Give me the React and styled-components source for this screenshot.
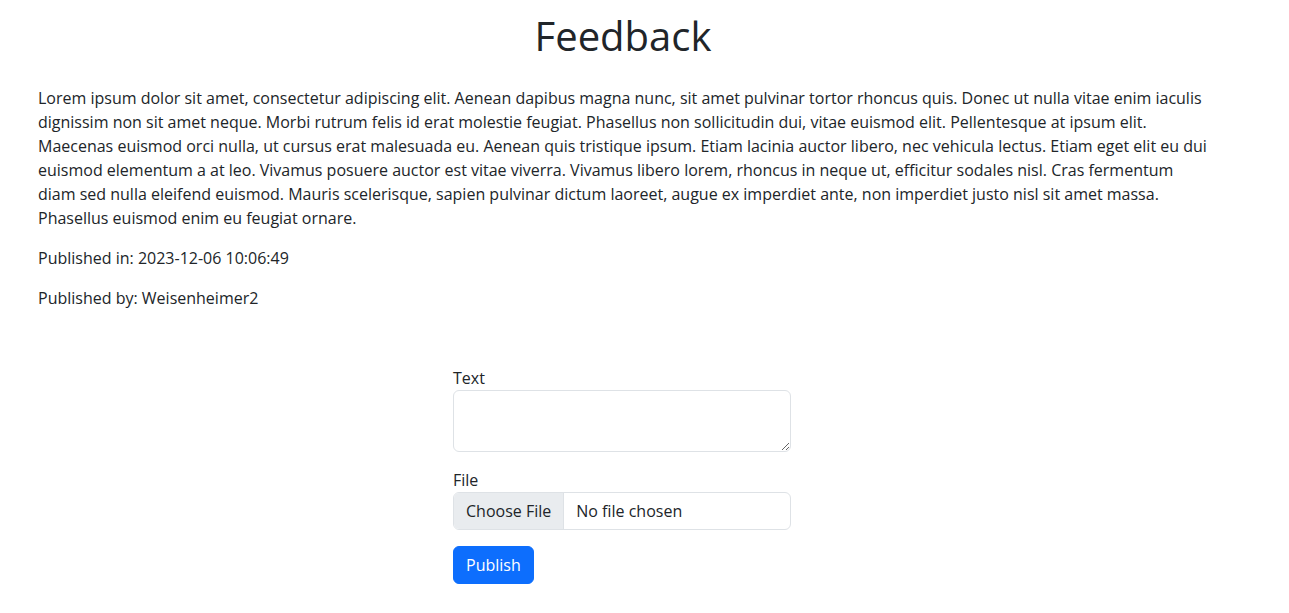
import React from 'react';
import styled, { createGlobalStyle } from 'styled-components';

const COLORS = {
  text: '#212529',
  border: '#dee2e6',
  tertiary: '#e9ecef',
  primary: '#0d6efd',
};

const GlobalStyle = createGlobalStyle`
  *, *::before, *::after {
    box-sizing: border-box;
  }
  body {
    margin: 0;
    font-family: "Open Sans", "Noto Sans", sans-serif;
    font-size: 16px;
    line-height: 1.5;
    color: ${COLORS.text};
    background: #fff;
  }
`;

const App = () => {
  return (
    <>
      <GlobalStyle />
      <Container>
        <Title>Feedback</Title>
        <Paragraph>
          Lorem ipsum dolor sit amet, consectetur adipiscing elit. Aenean dapibus magna nunc, sit amet
          pulvinar tortor rhoncus quis. Donec ut nulla vitae enim iaculis dignissim non sit amet neque.
          Morbi rutrum felis id erat molestie feugiat. Phasellus non sollicitudin dui, vitae euismod
          elit. Pellentesque at ipsum elit. Maecenas euismod orci nulla, ut cursus erat malesuada eu.
          Aenean quis tristique ipsum. Etiam lacinia auctor libero, nec vehicula lectus. Etiam eget elit
          eu dui euismod elementum a at leo. Vivamus posuere auctor est vitae viverra. Vivamus libero
          lorem, rhoncus in neque ut, efficitur sodales nisl. Cras fermentum diam sed nulla eleifend
          euismod. Mauris scelerisque, sapien pulvinar dictum laoreet, augue ex imperdiet ante, non
          imperdiet justo nisl sit amet massa. Phasellus euismod enim eu feugiat ornare.
        </Paragraph>
        <Paragraph>Published in: 2023-12-06 10:06:49</Paragraph>
        <Paragraph>Published by: Weisenheimer2</Paragraph>

        <Form onSubmit={(e) => e.preventDefault()}>
          <Field>
            <Label htmlFor="text">Text</Label>
            <TextArea id="text" name="text" />
          </Field>
          <Field>
            <Label htmlFor="file">File</Label>
            <FileInput id="file" name="file" type="file" />
          </Field>
          <Button type="submit">Publish</Button>
        </Form>
      </Container>
    </>
  );
};

const Container = styled.main`
  width: 1170px;
  margin-left: 38px;
`;

const Title = styled.h1`
  margin: 12px 0 26px;
  font-size: 40px;
  font-weight: 500;
  line-height: 1.2;
  text-align: center;
`;

const Paragraph = styled.p`
  margin: 0 0 16px;
`;

const Form = styled.form`
  width: 340px;
  padding-right: 2px;
  margin: 56px auto 0;
  display: flex;
  flex-direction: column;
  align-items: flex-start;
  gap: 16px;
`;

const Field = styled.div`
  width: 100%;
  display: flex;
  flex-direction: column;
`;

const Label = styled.label`
  line-height: 24px;
`;

const controlStyles = `
  display: block;
  width: 100%;
  font: inherit;
  color: ${COLORS.text};
  background-color: #fff;
  border: 1px solid ${COLORS.border};
  border-radius: 6px;
  outline: none;
`;

const TextArea = styled.textarea`
  ${controlStyles}
  height: 62px;
  min-height: 62px;
  padding: 6px 12px;
  resize: vertical;
`;

const FileInput = styled.input`
  ${controlStyles}
  height: 38px;
  padding: 6px 12px;
  line-height: 24px;
  overflow: hidden;

  &::file-selector-button {
    margin: -6px 12px -6px -12px;
    padding: 6px 12px;
    height: 36px;
    font: inherit;
    color: ${COLORS.text};
    background-color: ${COLORS.tertiary};
    border: 0;
    border-right: 1px solid ${COLORS.border};
    border-radius: 0;
  }
`;

const Button = styled.button`
  height: 38px;
  padding: 6px 12px;
  font: inherit;
  color: #fff;
  background-color: ${COLORS.primary};
  border: 1px solid ${COLORS.primary};
  border-radius: 6px;
  cursor: pointer;
`;

export default App;
